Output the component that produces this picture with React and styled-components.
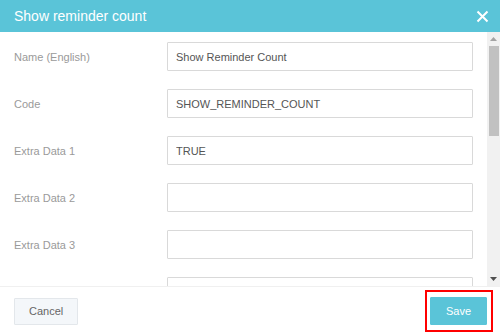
import React from "react";
import styled, { createGlobalStyle } from "styled-components";

const GlobalStyle = createGlobalStyle`
  html, body {
    margin: 0;
    padding: 0;
    background: #ffffff;
    font-family: "Liberation Sans", Arial, sans-serif;
  }
`;

const Dialog = styled.div`
  width: 500px;
  height: 333px;
  display: flex;
  flex-direction: column;
  background: #ffffff;
  overflow: hidden;
`;

const Header = styled.div`
  height: 32px;
  flex: none;
  background: #5ac4d8;
  display: flex;
  align-items: center;
  justify-content: space-between;
  padding: 0 10px 0 14px;
  box-sizing: border-box;
`;

const Title = styled.h1`
  margin: 0;
  font-size: 14px;
  font-weight: normal;
  color: #ffffff;
`;

const CloseButton = styled.button`
  width: 16px;
  height: 16px;
  padding: 0;
  border: 0;
  background: transparent;
  display: flex;
  align-items: center;
  justify-content: center;
  cursor: pointer;
`;

const Body = styled.div`
  height: 254px;
  flex: none;
  display: flex;
`;

const Content = styled.div`
  flex: 1;
  min-width: 0;
  overflow: hidden;
  padding: 10px 14px 0 14px;
`;

const ScrollTrack = styled.div`
  width: 13px;
  flex: none;
  background: #f1f1f1;
  display: flex;
  flex-direction: column;
`;

const ScrollArrow = styled.div`
  height: 14px;
  flex: none;
  display: flex;
  align-items: center;
  justify-content: center;
`;

const ScrollThumb = styled.div`
  height: 90px;
  flex: none;
  margin: 0 1px 0 2px;
  background: #c1c1c1;
`;

const ScrollSpace = styled.div`
  flex: 1;
`;

const Row = styled.div`
  display: flex;
  align-items: center;
  height: 29px;
  margin-bottom: 18px;
`;

const Label = styled.label`
  width: 153px;
  flex: none;
  font-size: 11px;
  color: #9a9a9a;
`;

const Input = styled.input`
  flex: 1;
  min-width: 0;
  height: 29px;
  box-sizing: border-box;
  border: 1px solid #d9d9d9;
  border-radius: 1px;
  padding: 0 8px;
  font-family: "Liberation Sans", Arial, sans-serif;
  font-size: 11px;
  color: #555555;
  background: #ffffff;
  outline: none;
`;

const Footer = styled.div`
  flex: 1;
  display: flex;
  align-items: center;
  justify-content: space-between;
  padding: 2px 7px 0 14px;
  border-top: 1px solid #f0f0f0;
  box-sizing: border-box;
`;

const Button = styled.button`
  height: ${(p) => (p.$primary ? "28px" : "27px")};
  padding: 0 ${(p) => (p.$primary ? "15px" : "14px")};
  box-sizing: border-box;
  border: 1px solid ${(p) => (p.$primary ? "#5ac4d8" : "#e3e7eb")};
  background: ${(p) => (p.$primary ? "#5ac4d8" : "#f4f7fa")};
  color: ${(p) => (p.$primary ? "#ffffff" : "#666666")};
  font-family: "Liberation Sans", Arial, sans-serif;
  font-size: 11px;
  border-radius: 1px;
  cursor: pointer;
`;

const Highlight = styled.div`
  border: 2px solid #ff0000;
  padding: 5px 4px 5px 3px;
  display: flex;
`;

const fields = [
  ["Name (English)", "Show Reminder Count"],
  ["Code", "SHOW_REMINDER_COUNT"],
  ["Extra Data 1", "TRUE"],
  ["Extra Data 2", ""],
  ["Extra Data 3", ""],
  ["", ""],
];

export default function App() {
  return (
    <>
      <GlobalStyle />
      <Dialog>
        <Header>
          <Title>Show reminder count</Title>
          <CloseButton aria-label="Close">
            <svg width="13" height="13" viewBox="0 0 13 13">
              <path
                d="M1.5 1.5 L11.5 11.5 M11.5 1.5 L1.5 11.5"
                stroke="#ffffff"
                strokeWidth="2"
                fill="none"
              />
            </svg>
          </CloseButton>
        </Header>
        <Body>
          <Content>
            {fields.map(([label, value], i) => (
              <Row key={i}>
                <Label>{label}</Label>
                <Input defaultValue={value} />
              </Row>
            ))}
          </Content>
          <ScrollTrack>
            <ScrollArrow>
              <svg width="7" height="4" viewBox="0 0 7 4">
                <path d="M0 4 L3.5 0 L7 4 Z" fill="#a3a3a3" />
              </svg>
            </ScrollArrow>
            <ScrollThumb />
            <ScrollSpace />
            <ScrollArrow>
              <svg width="7" height="4" viewBox="0 0 7 4">
                <path d="M0 0 L3.5 4 L7 0 Z" fill="#505050" />
              </svg>
            </ScrollArrow>
          </ScrollTrack>
        </Body>
        <Footer>
          <Button>Cancel</Button>
          <Highlight>
            <Button $primary>Save</Button>
          </Highlight>
        </Footer>
      </Dialog>
    </>
  );
}
